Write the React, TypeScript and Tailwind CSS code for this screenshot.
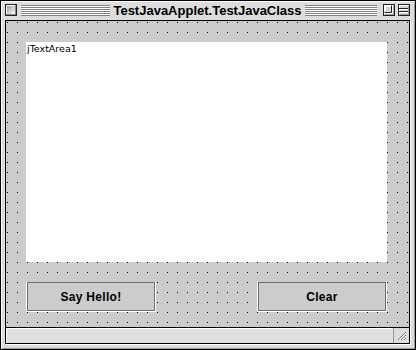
import React from "react";

function CloseBox() {
  return (
    <svg width="12" height="12" viewBox="0 0 12 12" className="shrink-0 block">
      <defs>
        <linearGradient id="cg" x1="0" y1="0" x2="1" y2="1">
          <stop offset="0" stopColor="#9a9a9a" />
          <stop offset="0.5" stopColor="#cfcfcf" />
          <stop offset="1" stopColor="#ffffff" />
        </linearGradient>
      </defs>
      <rect x="0.5" y="0.5" width="11" height="11" fill="#222" stroke="#222" />
      <rect x="2" y="2" width="8" height="8" fill="url(#cg)" />
      <path d="M1.5 10.5 V1.5 H10.5" stroke="#ffffff" fill="none" />
      <path d="M10.5 1.5 V10.5 H1.5" stroke="#888" fill="none" />
    </svg>
  );
}

function ZoomBox() {
  return (
    <svg width="12" height="12" viewBox="0 0 12 12" className="shrink-0 block">
      <rect x="0.5" y="0.5" width="11" height="11" fill="#d4d4d4" stroke="#222" />
      <path d="M1.5 10.5 V1.5 H10.5" stroke="#ffffff" fill="none" />
      <path d="M1.5 8.5 H8.5 V1.5" stroke="#222" fill="none" />
      <path d="M2.5 7.5 V2.5 H7.5" stroke="#fff" fill="none" />
      <path d="M2 9.5 H9.5 V2" stroke="#fff" fill="none" />
      <path d="M10.5 2 V10.5 H2" stroke="#999" fill="none" />
    </svg>
  );
}

function CollapseBox() {
  return (
    <svg width="12" height="12" viewBox="0 0 12 12" className="shrink-0 block">
      <rect x="0.5" y="0.5" width="11" height="11" fill="#d4d4d4" stroke="#222" />
      <path d="M1.5 10.5 V1.5 H10.5" stroke="#ffffff" fill="none" />
      <path d="M1 4.5 H11" stroke="#222" />
      <path d="M1 7.5 H11" stroke="#222" />
      <path d="M2 5.5 H10" stroke="#fff" />
      <path d="M2 8.5 H10" stroke="#fff" />
      <path d="M10.5 2 V10.5 H2" stroke="#999" fill="none" />
    </svg>
  );
}

function GrowBox() {
  return (
    <svg width="15" height="14" viewBox="0 0 15 14" className="block">
      <path d="M4 12 L12 4" stroke="#777" strokeWidth="1" />
      <path d="M5 12 L12 5" stroke="#fff" strokeWidth="1" />
      <path d="M7 12 L12 7" stroke="#777" strokeWidth="1" />
      <path d="M8 12 L12 8" stroke="#fff" strokeWidth="1" />
      <path d="M10 12 L12 10" stroke="#777" strokeWidth="1" />
      <path d="M11 12 L12 11" stroke="#fff" strokeWidth="1" />
    </svg>
  );
}

function Button({ label }: { label: string }) {
  return (
    <div className="w-[130px] h-[30px] flex border-l border-r border-b border-white">
      <div className="flex-1 flex items-center justify-center border border-[#6e6e6e] bg-[#cccccc] text-[12px] font-bold text-black tracking-[0.3px]">
        {label}
      </div>
    </div>
  );
}

export default function App() {
  return (
    <div className="w-[416px] h-[350px] font-['Liberation_Sans',Arial,sans-serif] text-black">
      <div className="w-[416px] h-[350px] flex flex-col border border-black bg-[#dddddd] shadow-[inset_1px_1px_0_#ffffff,inset_-1px_-1px_0_#9a9a9a]">
        {/* title bar */}
        <div className="h-[19px] shrink-0 flex items-start pt-[3px] pl-[4px]">
          <CloseBox />
          <div className="ml-[4px] mt-[1px] w-[89px] h-[11px] [background-image:repeating-linear-gradient(to_bottom,#808080_0px,#808080_1px,#ffffff_1px,#ffffff_2px)]" />
          <div className="w-[195px] text-center text-[13px] font-bold leading-[13px] whitespace-nowrap">
            TestJavaApplet.TestJavaClass
          </div>
          <div className="mt-[1px] w-[72px] h-[11px] [background-image:repeating-linear-gradient(to_bottom,#808080_0px,#808080_1px,#ffffff_1px,#ffffff_2px)]" />
          <div className="ml-[6px]">
            <ZoomBox />
          </div>
          <div className="ml-[3px]">
            <CollapseBox />
          </div>
        </div>

        {/* content frame */}
        <div className="flex-1 ml-[4px] mr-[5px] mb-[5px] flex flex-col border border-black shadow-[1px_1px_0_#ffffff]">
          <div className="flex-1 bg-[#cccccc] [background-image:conic-gradient(from_270deg_at_1px_1px,#000000_90deg,transparent_0)] [background-size:10px_10px] [background-position:1px_1px] pl-[20px] pt-[21px]">
            <div className="w-[361px] h-[220px] bg-white pl-[1px] pt-[1px] font-['DejaVu_Sans',sans-serif] text-[9.5px] leading-[11px]">
              jTextArea1
            </div>
            <div className="mt-[20px] w-[361px] flex justify-between">
              <Button label="Say Hello!" />
              <Button label="Clear" />
            </div>
          </div>
          <div className="h-[16px] shrink-0 flex border-t border-black">
            <div className="flex-1 bg-[#e0e0e0] border-r border-[#999999] shadow-[inset_1px_1px_0_#ffffff]" />
            <div className="w-[15px] bg-[#dddddd] flex items-start">
              <GrowBox />
            </div>
          </div>
        </div>
      </div>
    </div>
  );
}
